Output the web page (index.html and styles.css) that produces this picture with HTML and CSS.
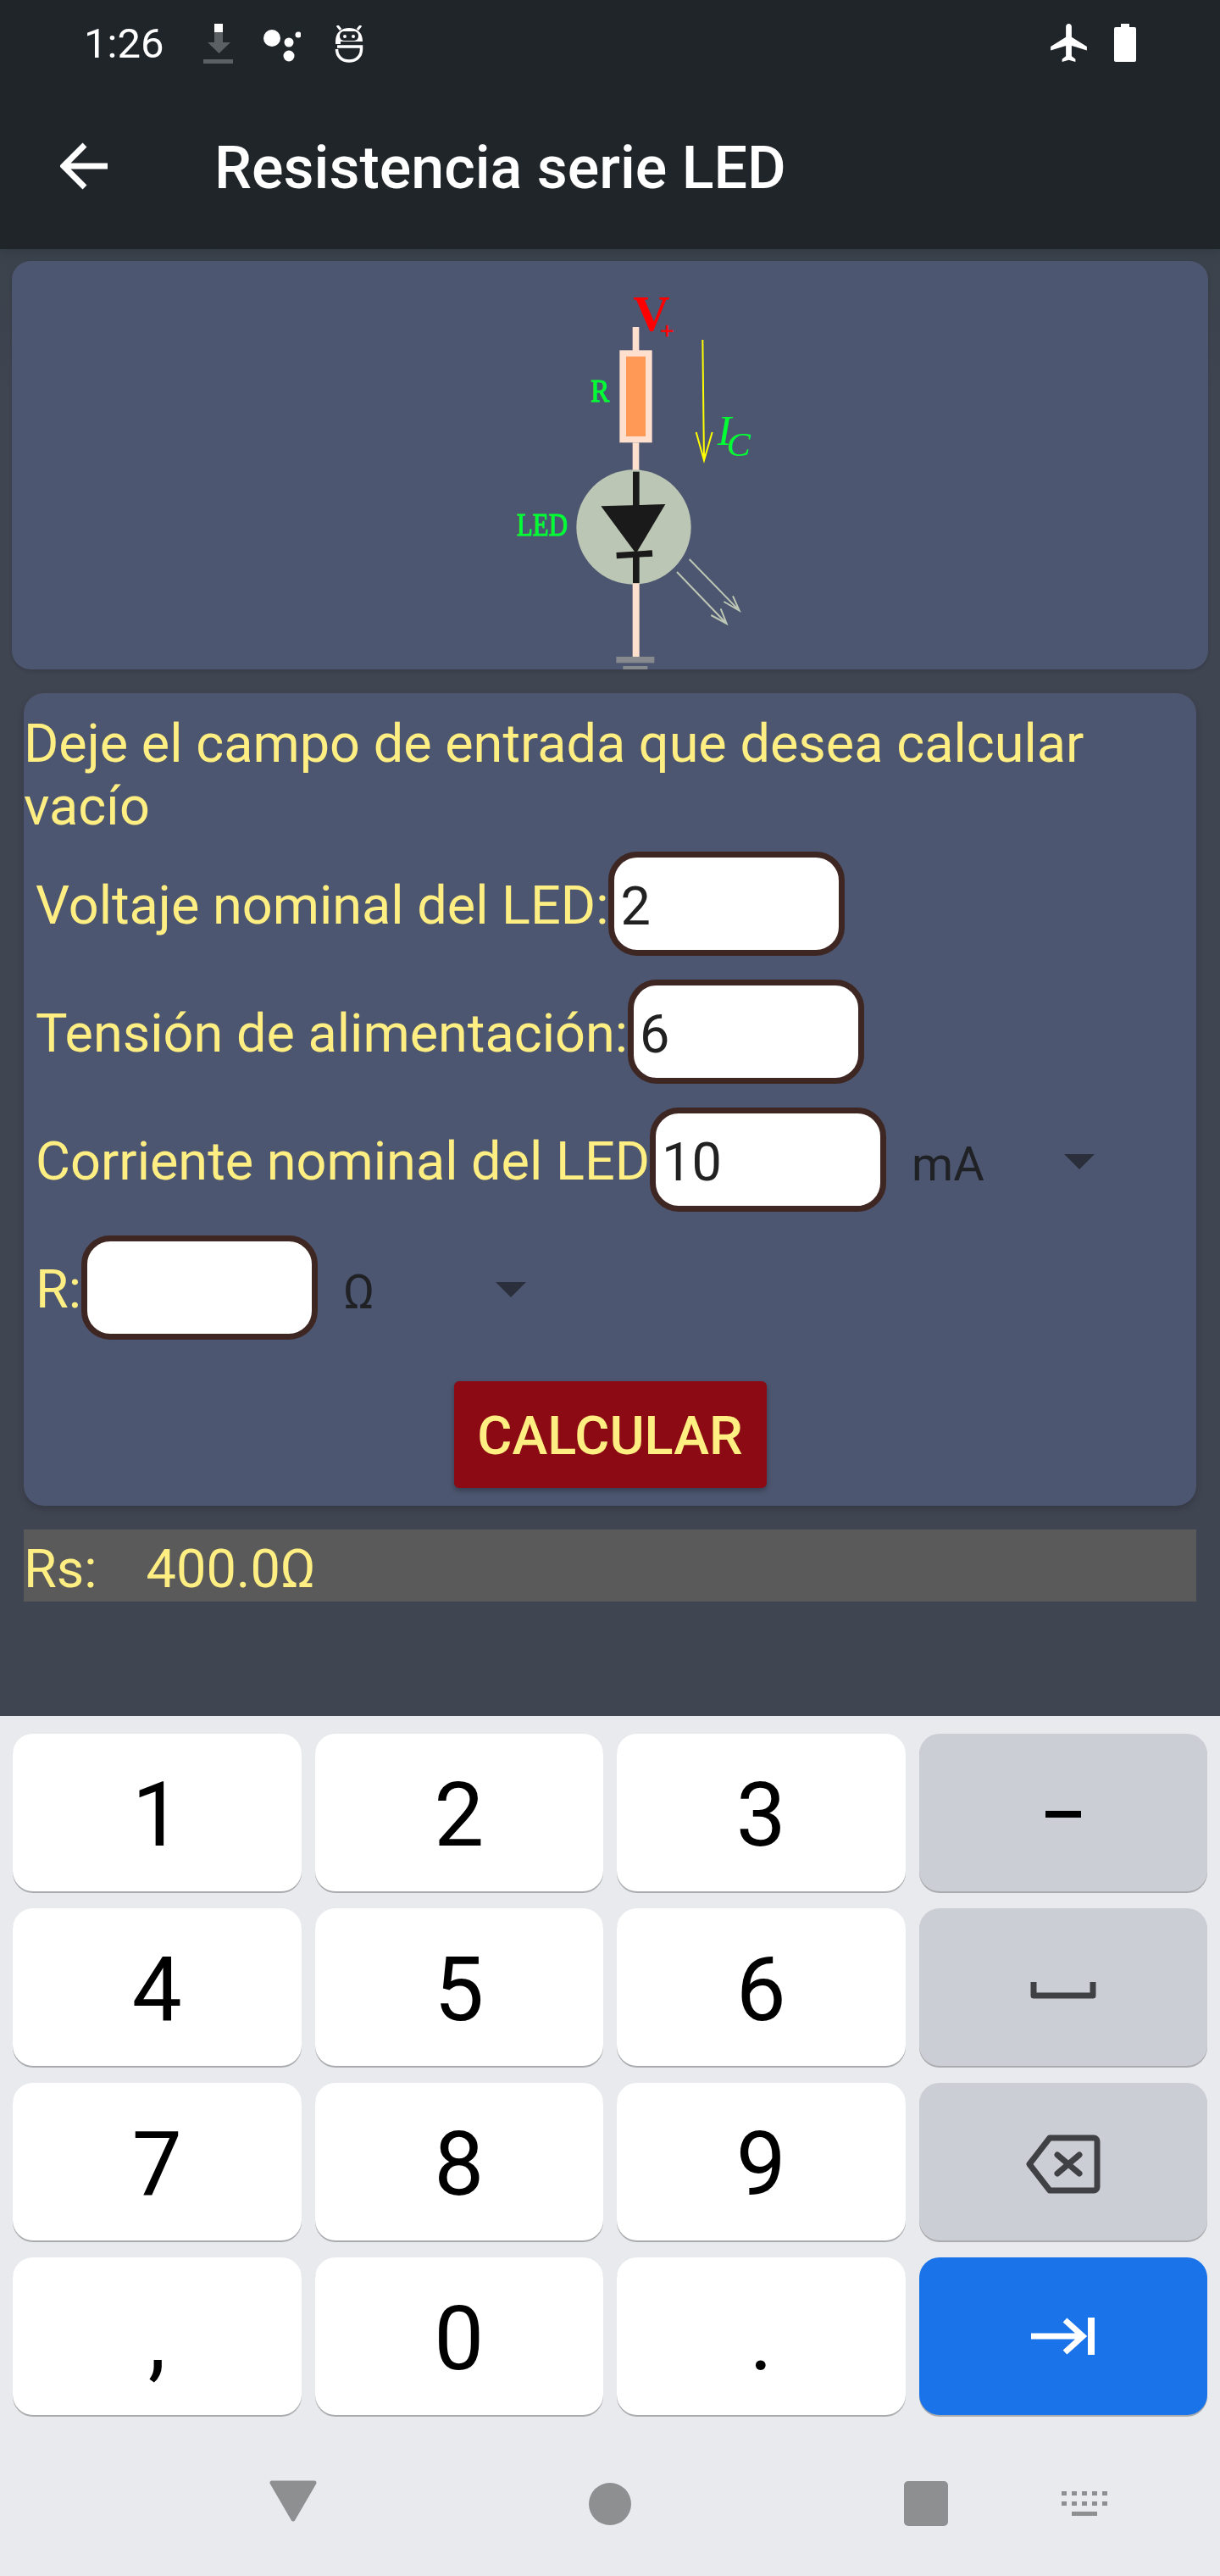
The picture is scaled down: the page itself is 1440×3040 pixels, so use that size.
FILE: index.html
```html
<!DOCTYPE html>
<html lang="es">
<head>
<meta charset="utf-8">
<title>Resistencia serie LED</title>
<link rel="stylesheet" href="styles.css">
</head>
<body>
<div class="phone">
  <header class="top">
    <div class="status">
      <span class="time">1:26</span>
      <svg class="ic-download" viewBox="0 0 35 47"><rect x="13" width="10" height="10" fill="#fff"/><rect x="13" y="10" width="10" height="13" fill="#5b6064"/><path d="M5 22h27L18.500 35z" fill="#5b6064"/><rect y="42" width="35" height="5" fill="#5b6064"/></svg>
      <svg class="ic-assist" viewBox="0 0 46 44"><circle cx="12" cy="16" r="10" fill="#fff"/><circle cx="32" cy="21" r="5.500" fill="#fff"/><circle cx="43" cy="12" r="3.500" fill="#fff"/><circle cx="32" cy="37" r="6.500" fill="#fff"/></svg>
      <svg class="ic-robot" viewBox="0 0 34 44"><path d="M1 19C1 8 8 3 17 3s16 5 16 16v3H1z" fill="#fff"/><path d="M3 0l4 5M31 0l-4 5" stroke="#fff" stroke-width="3"/><rect x="6" y="7" width="22" height="11" rx="5" fill="#20252a"/><circle cx="12" cy="13" r="2" fill="#fff"/><circle cx="22" cy="13" r="2" fill="#fff"/><path d="M3 25H31.500V28C31.500 37 25 42 17 42S2.500 37 2.500 28" fill="none" stroke="#fff" stroke-width="3.500"/><path d="M7 19h26v3H7z" fill="#20252a"/></svg>
      <span class="status-fill"></span>
      <svg class="ic-plane" viewBox="2 2 19 20"><path d="M21 16v-2l-8-5V3.500c0-.83-.67-1.500-1.500-1.500S10 2.670 10 3.500V9l-8 5v2l8-2.500V19l-2 1.500V22l3.500-1 3.500 1v-1.500L13 19v-5.500l8 2.500z" fill="#fff"/></svg>
      <svg class="ic-battery" viewBox="0 0 26 45"><path d="M8 0h10v4h6a2 2 0 0 1 2 2v37a2 2 0 0 1-2 2H2a2 2 0 0 1-2-2V6a2 2 0 0 1 2-2h6z" fill="#fff"/></svg>
    </div>
    <div class="appbar">
      <svg class="ic-back" viewBox="0 0 56 56"><path d="M56 28H5M29 3 4 28l25 25" fill="none" stroke="#fff" stroke-width="7"/></svg>
      <h1 class="title">Resistencia serie LED</h1>
    </div>
  </header>

  <main class="content">
    <section class="diagram-card">
      <svg class="diagram" viewBox="0 0 1080 1410">
        <rect x="560" y="198" width="23" height="90" fill="#ffe0cf"/>
        <rect x="514" y="280" width="115" height="327" fill="#ffe0cf"/>
        <rect x="537" y="302" width="69" height="283" fill="#ff9955"/>
        <rect x="560" y="607" width="23" height="100" fill="#ffe0cf"/>
        <circle cx="564" cy="906" r="203" fill="#bcc6b4"/>
        <rect x="561" y="710" width="23" height="125" fill="#1a1a1a"/>
        <path d="M448 832 676 825 572 1000z" fill="#1a1a1a"/>
        <path d="M503 1007 630 999" stroke="#1a1a1a" stroke-width="22"/>
        <rect x="561" y="1005" width="23" height="100" fill="#1a1a1a"/>
        <rect x="560" y="1105" width="24" height="260" fill="#ffe0cf"/>
        <rect x="502" y="1365" width="135" height="22" fill="#868a8e"/>
        <rect x="526" y="1398" width="87" height="12" fill="#868a8e"/>
        <path d="M808 243 813 670M785 570 813 670 842 570" fill="none" stroke="#ffff00" stroke-width="6"/>
        <path d="M717 1065 893 1248M838 1218 893 1248 872 1195M761 1020 938 1202M883 1170 938 1202 915 1150" fill="none" stroke="#bcc6b4" stroke-width="6"/>
        <text class="d-v" x="562" y="210">V</text>
        <text class="d-plus" x="658" y="240">+</text>
        <text class="d-label" x="412" y="462" textLength="66" lengthAdjust="spacingAndGlyphs">R</text>
        <text class="d-label" x="150" y="935" textLength="180" lengthAdjust="spacingAndGlyphs">LED</text>
        <text class="d-i" x="860" y="615">I</text>
        <text class="d-c" x="893" y="655" textLength="84" lengthAdjust="spacingAndGlyphs">C</text>
      </svg>
    </section>

    <section class="form-card">
      <p class="hint">Deje el campo de entrada que desea calcular vacío</p>
      <div class="row">
        <label class="label">Voltaje nominal del LED:</label>
        <input class="field" type="text" value="2">
      </div>
      <div class="row">
        <label class="label">Tensión de alimentación:</label>
        <input class="field" type="text" value="6">
      </div>
      <div class="row">
        <label class="label">Corriente nominal del LED</label>
        <input class="field" type="text" value="10">
        <div class="spinner"><span>mA</span><i class="caret"></i></div>
      </div>
      <div class="row">
        <label class="label">R:</label>
        <input class="field" type="text" value="">
        <div class="spinner"><span>Ω</span><i class="caret"></i></div>
      </div>
      <button class="calc" type="button">CALCULAR</button>
    </section>

    <div class="result"><span>Rs:</span><span class="result-value">400.0Ω</span></div>
  </main>

  <section class="keyboard">
    <div class="keys">
      <div class="key">1</div>
      <div class="key">2</div>
      <div class="key">3</div>
      <div class="key alt"><svg class="ic-dash" viewBox="0 0 42 8"><rect width="42" height="8" fill="#000"/></svg></div>
      <div class="key">4</div>
      <div class="key">5</div>
      <div class="key">6</div>
      <div class="key alt"><svg class="ic-space" viewBox="0 0 78 22"><path d="M4 2v16h70V2" fill="none" stroke="#3f4145" stroke-width="7" stroke-linejoin="round"/></svg></div>
      <div class="key">7</div>
      <div class="key">8</div>
      <div class="key">9</div>
      <div class="key alt"><svg class="ic-backspace" viewBox="0 0 88 70"><path d="M28 4h52a4 4 0 0 1 4 4v54a4 4 0 0 1-4 4H28L4 35z" fill="none" stroke="#3f4145" stroke-width="7" stroke-linejoin="round"/><path d="M37 24l26 22M63 24 37 46" fill="none" stroke="#3f4145" stroke-width="7" stroke-linecap="round"/></svg></div>
      <div class="key">,</div>
      <div class="key">0</div>
      <div class="key">.</div>
      <div class="key enter"><svg class="ic-tab" viewBox="0 0 75 44"><path d="M0 22h60M40 3l21 19-21 19" fill="none" stroke="#fff" stroke-width="7"/><rect x="67" width="8" height="44" fill="#fff"/></svg></div>
    </div>
    <nav class="nav">
      <svg class="nav-back" viewBox="0 0 56 49"><path d="M3 3h50L28 46z" fill="#8e8f91" stroke="#8e8f91" stroke-width="5" stroke-linejoin="round"/></svg>
      <span class="nav-home"></span>
      <span class="nav-recent"></span>
      <svg class="nav-kbd" viewBox="0 0 54 30"><path d="M0 0h6v5H0zM12 0h6v5h-6zM24 0h6v5h-6zM36 0h6v5h-6zM48 0h6v5h-6zM0 12h6v5H0zM12 12h6v5h-6zM24 12h6v5h-6zM36 12h6v5h-6zM48 12h6v5h-6zM12 24h30v5H12z" fill="#8e8f91"/></svg>
    </nav>
  </section>
</div>
</body>
</html>
```
FILE: styles.css
```css
* { box-sizing: border-box; }
html, body { margin: 0; padding: 0; }
body { font-family: Roboto, "Liberation Sans", sans-serif; background: #3f4551; }
.phone { width: 1440px; height: 3040px; display: flex; flex-direction: column; overflow: hidden; }

.top { height: 294px; background: #20252a; position: relative; z-index: 1; box-shadow: 0 4px 10px rgba(0,0,0,.12); flex: none; }
.status { height: 100px; display: flex; align-items: flex-start; color: #fff; padding: 28px 99px 0 99px; }
.time { font-size: 49px; line-height: 47px; width: 141px; }
.ic-download { width: 35px; height: 47px; margin-right: 34px; }
.ic-assist { width: 46px; height: 44px; margin-right: 40px; margin-top: 1px; }
.ic-robot { width: 34px; height: 44px; margin-top: 2px; }
.status-fill { flex: 1; }
.ic-plane { width: 43px; height: 45px; margin-right: 32px; }
.ic-battery { width: 26px; height: 45px; }

.appbar { height: 194px; display: flex; align-items: flex-start; padding: 68px 0 0 71px; }
.ic-back { width: 56px; height: 56px; margin-right: 126px; }
.title { margin: -10px 0 0; font-size: 70px; line-height: 80px; font-weight: 500; color: #fff; white-space: nowrap; }

.content { flex: 1; padding: 14px 28px 0; background: linear-gradient(#3a424b, #404552 200px); min-height: 0; }
.diagram-card { margin: 0 -14px; height: 482px; background: #4d5670; border-radius: 22px; padding: 12px 0 0 546px; box-shadow: 0 2px 4px rgba(0,0,0,.15); overflow: hidden; }
.diagram { display: block; width: 360px; height: 470px; }
.diagram text { font-family: "Liberation Serif", serif; }
.d-v { font-size: 180px; font-weight: 700; fill: #ff0000; }
.d-plus { font-size: 85px; fill: #ff0000; stroke: #ff0000; stroke-width: 3; }
.d-label { font-size: 113px; fill: #00ff33; stroke: #00ff33; stroke-width: 3; }
.d-i { font-size: 150px; font-style: italic; fill: #00ff33; }
.d-c { font-size: 118px; font-style: italic; fill: #00ff33; }

.form-card { margin-top: 28px; height: 959px; background: #4d5670; border-radius: 24px; padding: 23px 0 0; box-shadow: 0 4px 8px rgba(0,0,0,.18); display: flex; flex-direction: column; }
.hint { margin: 0 0 16px; font-size: 63px; line-height: 74px; color: #ffee82; }
.row { display: flex; align-items: center; height: 123px; margin-bottom: 28px; padding-left: 14px; }
.label { font-size: 63px; line-height: 74px; padding-top: 5px; color: #ffee82; white-space: nowrap; }
.field { width: 279px; height: 123px; flex: none; border: 7px solid #3e2723; border-radius: 34px; background: #fff; padding: 5px 0 0 7px; font: 63px Roboto, sans-serif; color: #212121; outline: none; }
.spinner { width: 216px; margin-left: 30px; padding-top: 10px; display: flex; justify-content: space-between; align-items: center; font-size: 56px; color: #1f2125; }
.caret { width: 0; height: 0; border-left: 18px solid transparent; border-right: 18px solid transparent; border-top: 18px solid #2a2f3b; margin-top: -6px; }
.calc { align-self: center; width: 369px; height: 126px; margin-top: 21px; border: 0; border-radius: 6px; background: #8b0a14; color: #ffee82; font: 500 63px Roboto, sans-serif; box-shadow: 0 3px 6px rgba(0,0,0,.3); padding: 2px 0 0; }

.result { margin-top: 28px; height: 85px; background: #5a5a5a; color: #ffee82; font-size: 63px; line-height: 93px; }
.result-value { margin-left: 58px; }

.keyboard { height: 1015px; background: #e8eaed; flex: none; padding-top: 21px; }
.keys { display: grid; grid-template-columns: repeat(4, 340.500px); grid-auto-rows: 186px; column-gap: 16px; row-gap: 20px; padding-left: 15px; }
.key { background: #fff; border-radius: 24px; box-shadow: 0 2px 0 #aaabae; display: flex; align-items: center; justify-content: center; font-size: 105px; color: #000; line-height: 1; padding-top: 6px; }
.alt { background: #ccced6; padding-top: 0; }
.enter { background: #1a73e8; padding-top: 0; }
.ic-dash { width: 42px; height: 8px; margin-top: 3px; }
.ic-space { width: 78px; height: 22px; margin-top: 6px; }
.ic-backspace { width: 88px; height: 70px; margin-top: 6px; }
.ic-tab { width: 75px; height: 44px; }

.nav { display: flex; align-items: center; height: 189px; padding: 20px 0 0 318px; }
.nav-back { width: 56px; height: 49px; margin-right: 321px; margin-top: -6px; }
.nav-home { width: 50px; height: 50px; border-radius: 50%; background: #8e8f91; margin-right: 322px; }
.nav-recent { width: 52px; height: 53px; border-radius: 5px; background: #8e8f91; margin-right: 134px; }
.nav-kbd { width: 54px; height: 30px; }
```
